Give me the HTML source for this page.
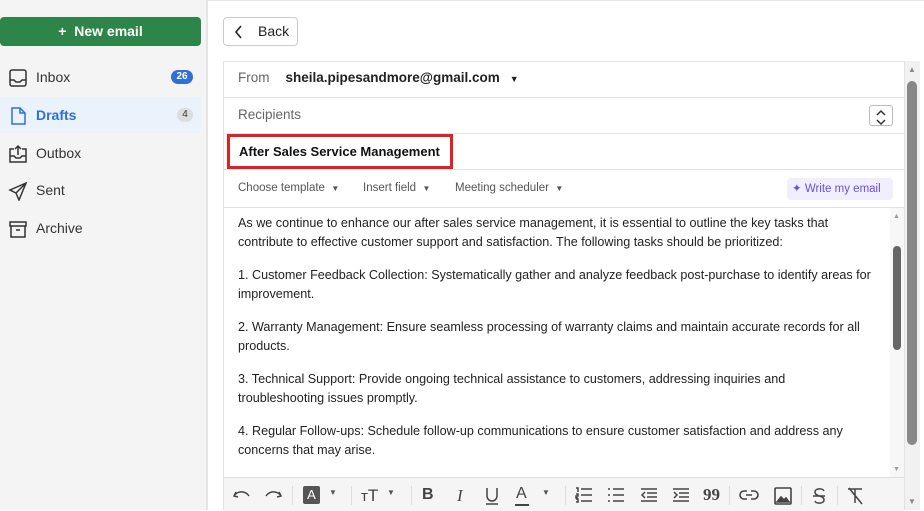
<!DOCTYPE html>
<html><head><meta charset="utf-8"><style>
*{box-sizing:border-box;margin:0;padding:0}
body{width:924px;height:510px;overflow:hidden;font-family:"Liberation Sans",sans-serif;background:#fff;position:relative;color:#222}
.side{position:absolute;left:0;top:0;width:207px;height:510px;background:#f4f4f4;border-right:1px solid #e4e4e4}
.topline{position:absolute;left:207px;top:0;right:0;height:3px;border-top:1px solid #e6e6e6}
.new{position:absolute;left:0;top:17px;width:201px;height:29px;background:#2e8549;border-radius:4px;color:#fff;font-weight:bold;font-size:14px;text-align:center;line-height:29px}
.nav{position:absolute;left:0;width:201px;height:36px;font-size:14px;line-height:36px;color:#333}
.nav svg{position:absolute;left:8px;top:9px}
.nav span.t{position:absolute;left:36px}
.badge{position:absolute;right:8px;top:11px;height:14px;border-radius:7px;font-size:10px;font-weight:bold;line-height:14px;text-align:center}
.back{position:absolute;left:223px;top:17px;width:75px;height:29px;border:1px solid #ccc;border-radius:4px;font-size:14px;line-height:27px;padding-left:34px;color:#222}
.card{position:absolute;left:223px;top:61px;width:682px;height:449px;border:1px solid #e2e2e2;border-bottom:none}
.row{position:absolute;left:0;right:0;border-bottom:1px solid #e2e2e2;font-size:13.5px}
.gray{color:#666}
.body{position:absolute;left:14px;top:152px;width:660px;font-size:12.6px;line-height:19px;color:#222;white-space:nowrap}
.body p{margin-bottom:14px}
.tb{position:absolute;left:0;right:0;top:415px;height:34px;background:#f5f5f5;border-top:1px solid #ddd}
.tb svg{position:absolute;top:9px}
.dd{position:absolute;top:0}
.sep{position:absolute;top:8px;width:1px;height:19px;background:#ddd}
</style></head><body>
<div class="side">
<div class="new">+&nbsp; New email</div>
<div class="nav" style="top:59px"><svg width="20" height="20" viewBox="0 0 20 20" fill="none" stroke="#333" stroke-width="1.5"><rect x="2" y="2" width="16" height="16" rx="2"/><path d="M2 12h4l2 2h4l2-2h4"/></svg><span class="t">Inbox</span><span class="badge" style="background:#2f6fd6;color:#fff;width:22px">26</span></div>
<div class="nav" style="top:97px;background:#eaf2fc;color:#2f6fd6;font-weight:bold"><svg width="20" height="20" viewBox="0 0 20 20" fill="none" stroke="#2f6fd6" stroke-width="1.5"><path d="M4 2h8l5 5v11H4z"/><path d="M12 2v5h5"/></svg><span class="t">Drafts</span><span class="badge" style="background:#ddd;color:#333;width:16px;font-weight:normal">4</span></div>
<div class="nav" style="top:135px"><svg width="20" height="20" viewBox="0 0 20 20" fill="none" stroke="#333" stroke-width="1.5"><path d="M6 5H2v13h16V5h-4M2 12h4l2 2h4l2-2h4M10 11V2M7 5l3-3 3 3"/></svg><span class="t">Outbox</span></div>
<div class="nav" style="top:172px"><svg width="20" height="20" viewBox="0 0 20 20" fill="none" stroke="#333" stroke-width="1.5"><path d="M18 2L2 9l6 3 3 7zM8 12l10-10"/></svg><span class="t">Sent</span></div>
<div class="nav" style="top:210px"><svg width="20" height="20" viewBox="0 0 20 20" fill="none" stroke="#333" stroke-width="1.5"><rect x="2" y="3" width="16" height="4"/><path d="M3 7v11h14V7M8 11h4"/></svg><span class="t">Archive</span></div>
</div>
<div class="topline"></div>
<div class="back"><svg style="position:absolute;left:10px;top:7px" width="10" height="14" viewBox="0 0 10 14" fill="none" stroke="#222" stroke-width="1.6"><path d="M7 1L2 7l5 6"/></svg>Back</div>
<div class="card">
<div class="row" style="top:0;height:36px;line-height:32px;padding-left:14px"><span class="gray">From</span><span style="margin-left:16px;font-weight:bold;color:#222">sheila.pipesandmore@gmail.com</span><span style="margin-left:10px;font-size:9px">▼</span></div>
<div class="row" style="top:36px;height:36px;line-height:33px;padding-left:14px"><span class="gray">Recipients</span><div style="position:absolute;right:11px;top:7px;width:24px;height:21px;border:1px solid #bbb;border-radius:3px"><svg width="22" height="19" viewBox="0 0 22 19" fill="none" stroke="#333" stroke-width="1.5"><path d="M7 7l4-4 4 4M7 12l4 4 4-4"/></svg></div></div>
<div class="row" style="top:72px;height:36px"><div style="position:absolute;left:3px;top:0;width:226px;height:35px;border:3px solid #e31e24;font-weight:bold;font-size:13px;line-height:29px;padding-left:9px;color:#111">After Sales Service Management</div></div>
<div class="row" style="top:108px;height:38px;font-size:11.5px;color:#555;line-height:36px">
<span class="dd" style="left:14px">Choose template &nbsp;<span style="font-size:8px">▼</span></span>
<span class="dd" style="left:139px">Insert field &nbsp;<span style="font-size:8px">▼</span></span>
<span class="dd" style="left:231px">Meeting scheduler &nbsp;<span style="font-size:8px">▼</span></span>
<div style="position:absolute;right:11px;top:8px;width:106px;height:22px;background:#f1eefe;border-radius:4px;color:#6a4fe0;line-height:22px;padding-left:5px;font-size:11.5px">✦ Write my email</div></div>
<div class="body">
<p>As we continue to enhance our after sales service management, it is essential to outline the key tasks that<br>contribute to effective customer support and satisfaction. The following tasks should be prioritized:</p>
<p>1. Customer Feedback Collection: Systematically gather and analyze feedback post-purchase to identify areas for<br>improvement.</p>
<p>2. Warranty Management: Ensure seamless processing of warranty claims and maintain accurate records for all<br>products.</p>
<p>3. Technical Support: Provide ongoing technical assistance to customers, addressing inquiries and<br>troubleshooting issues promptly.</p>
<p>4. Regular Follow-ups: Schedule follow-up communications to ensure customer satisfaction and address any<br>concerns that may arise.</p>
</div>
<div style="position:absolute;left:666px;top:146px;width:14px;height:269px;background:#f7f7f7"><div style="position:absolute;left:3px;top:38px;width:8px;height:104px;background:#666;border-radius:4px"></div><div style="position:absolute;left:3px;top:5px;font-size:7px;color:#999">▲</div><div style="position:absolute;left:3px;bottom:4px;font-size:7px;color:#999">▼</div></div>
<div class="tb">
<svg style="left:8px" width="20" height="16" viewBox="0 0 20 16" fill="none" stroke="#444" stroke-width="1.5"><path d="M4 5l-2 4 4 1M2 9c3-5 11-6 15 0"/></svg>
<svg style="left:39px" width="20" height="16" viewBox="0 0 20 16" fill="none" stroke="#444" stroke-width="1.5"><path d="M16 5l2 4-4 1M18 9c-3-5-11-6-15 0"/></svg>
<div class="sep" style="left:68px"></div>
<span style="position:absolute;left:79px;top:8px;width:17px;height:18px;background:#555;color:#fff;font-size:13px;text-align:center;line-height:18px;border-radius:2px">A</span><span style="position:absolute;left:105px;top:10px;font-size:8px;color:#555">▼</span>
<div class="sep" style="left:127px"></div>
<span style="position:absolute;left:137px;top:8px;font-size:15px;color:#444">т<span style="font-size:17px">T</span></span><span style="position:absolute;left:163px;top:10px;font-size:8px;color:#555">▼</span>
<div class="sep" style="left:187px"></div>
<span style="position:absolute;left:198px;top:8px;font-size:16px;font-weight:bold;color:#444">B</span>
<span style="position:absolute;left:233px;top:8px;font-size:17px;font-style:italic;font-family:'Liberation Serif';color:#444">I</span>
<svg style="left:261px" width="14" height="18" viewBox="0 0 14 18" fill="none" stroke="#444" stroke-width="1.5"><path d="M2 1v8a5 5 0 0010 0V1M1 17h12"/></svg>
<span style="position:absolute;left:292px;top:7px;font-size:16px;color:#444">A</span><div style="position:absolute;left:291px;top:26px;width:14px;height:2px;background:#444"></div><span style="position:absolute;left:318px;top:10px;font-size:8px;color:#555">▼</span>
<div class="sep" style="left:341px"></div>
<svg style="left:351px" width="18" height="17" viewBox="0 0 18 17" fill="none" stroke="#444" stroke-width="1.5"><path d="M6 2h11M6 8h11M6 14h11M1 1h2v4M1 7h2v2H1v2h2M1 12h2v3H1"/></svg>
<svg style="left:383px" width="18" height="17" viewBox="0 0 18 17" fill="none" stroke="#444" stroke-width="1.5"><path d="M6 2h11M6 8h11M6 14h11M1 2h2M1 8h2M1 14h2"/></svg>
<svg style="left:416px" width="18" height="17" viewBox="0 0 18 17" fill="none" stroke="#444" stroke-width="1.5"><path d="M1 2h16M7 6h10M7 10h10M1 14h16M5 5L2 8l3 3"/></svg>
<svg style="left:448px" width="18" height="17" viewBox="0 0 18 17" fill="none" stroke="#444" stroke-width="1.5"><path d="M1 2h16M7 6h10M7 10h10M1 14h16M2 5l3 3-3 3"/></svg>
<span style="position:absolute;left:479px;top:7px;font-size:17px;font-family:'Liberation Serif';font-weight:bold;color:#444">99</span>
<div class="sep" style="left:505px"></div>
<svg style="left:515px" width="20" height="16" viewBox="0 0 20 16" fill="none" stroke="#444" stroke-width="1.6"><path d="M8 4H5a4 4 0 000 8h3M12 4h3a4 4 0 010 8h-3M7 8h6"/></svg>
<svg style="left:550px" width="18" height="18" viewBox="0 0 18 18" fill="none" stroke="#444" stroke-width="1.6"><rect x="1" y="1" width="16" height="16" rx="1"/><path d="M3 15l4-5 3 3 2-2 3 4z" fill="#444"/></svg>
<div class="sep" style="left:577px"></div>
<svg style="left:588px" width="14" height="18" viewBox="0 0 14 18" fill="none" stroke="#444" stroke-width="1.5"><path d="M12 4c-1-3-9-3-9 1 0 5 9 3 9 8 0 4-8 4-9 1M1 9h12"/></svg>
<div class="sep" style="left:613px"></div>
<svg style="left:623px" width="16" height="18" viewBox="0 0 16 18" fill="none" stroke="#444" stroke-width="1.5"><path d="M1 2h14M8 2v14M2 1l13 16"/></svg>
</div>
</div>
<div style="position:absolute;left:905px;top:61px;width:15px;height:449px;background:#f1f1f1"><div style="position:absolute;left:2px;top:20px;width:10px;height:364px;background:#888;border-radius:5px"></div><div style="position:absolute;left:3px;top:4px;font-size:8px;color:#888">▲</div><div style="position:absolute;left:3px;bottom:4px;font-size:8px;color:#888">▼</div></div>
<div style="position:absolute;left:207px;top:0;width:1px;height:510px;background:#e4e4e4"></div>
</body></html>
